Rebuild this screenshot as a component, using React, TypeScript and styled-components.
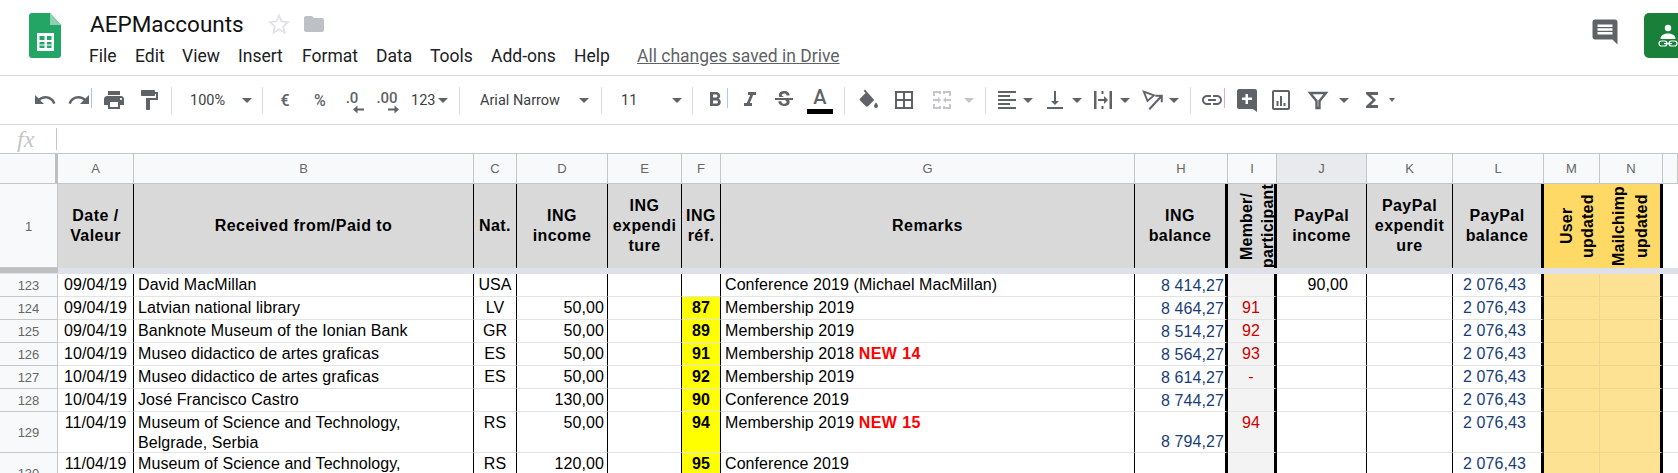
import React from "react";
import styled, {createGlobalStyle} from "styled-components";
import {
    MdUndo, MdRedo, MdPrint, MdFormatPaint, MdFormatBold, MdFormatItalic, MdStrikethroughS,
    MdBorderAll, MdFormatAlignLeft, MdVerticalAlignBottom, MdLink, MdFunctions,
} from "react-icons/md";

const GlobalStyle = createGlobalStyle`
    html, body {
        margin: 0;
        padding: 0;
        background: #fff;
        overflow: hidden;
    }
    body {
        font-family: Roboto, "Liberation Sans", sans-serif;
    }
`;

const Page = styled.div`
    width: 1678px;
    height: 473px;
    overflow: hidden;
    display: flex;
    flex-direction: column;
`;

/* ---------- title bar ---------- */
const TitleBar = styled.header`
    height: 75px;
    flex: none;
    display: flex;
    align-items: flex-start;
    border-bottom: 1px solid #dadce0;
`;
const LogoSlot = styled.div`
    margin: 13px 0 0 29px;
    width: 32px;
    height: 45px;
    flex: none;
`;
const TitleColumn = styled.div`
    margin-left: 28px;
    display: flex;
    flex-direction: column;
`;
const TitleRow = styled.div`
    height: 38px;
    display: flex;
    align-items: center;
    padding-top: 9px;
    box-sizing: border-box;
`;
const DocName = styled.span`
    font-size: 22.5px;
    color: #111;
    margin-left: 1px;
    width: 177px;
`;
const FolderSlot = styled.span`
    margin-left: 11px;
    display: flex;
`;
const MenuBar = styled.nav`
    display: flex;
    align-items: center;
    height: 35px;
    font-size: 17.5px;
    color: #202124;
`;
const MenuItem = styled.span<{$x: number}>`
    width: ${p => p.$x}px;
`;
const SavedNote = styled.span`
    color: #5f6368;
    text-decoration: underline;
`;
const RightActions = styled.div`
    margin-left: auto;
    display: flex;
    align-items: flex-start;
`;
const CommentSlot = styled.div`
    margin-top: 17px;
    display: flex;
    color: #5f6368;
`;
const ShareButton = styled.div`
    margin: 13px 0 0 24px;
    width: 34px;
    height: 45px;
    background: #188038;
    border-radius: 5px 0 0 5px;
    display: flex;
    align-items: center;
    padding-left: 14px;
    box-sizing: border-box;
`;

/* ---------- toolbar ---------- */
const Toolbar = styled.div`
    height: 48px;
    flex: none;
    display: flex;
    align-items: center;
    border-bottom: 1px solid #dadce0;
    color: #5f6368;
`;
const Tool = styled.span<{$ml: number; $w?: number; $mark?: string}>`
    position: relative;
    flex: none;
    margin-left: ${p => p.$ml}px;
    width: ${p => p.$w ?? 24}px;
    height: 24px;
    display: flex;
    align-items: center;
    justify-content: center;
    color: inherit;
    &::after {
        content: "";
        display: ${p => (p.$mark ? "block" : "none")};
        position: absolute;
        right: -1px;
        top: 0;
        width: 1px;
        height: 20px;
        background: ${p => p.$mark};
    }
`;
const TextTool = styled(Tool)`
    font-size: 16px;
    font-weight: 500;
`;
const Divider = styled.span<{$ml: number}>`
    flex: none;
    margin-left: ${p => p.$ml}px;
    width: 1px;
    height: 27px;
    background: #dadce0;
`;
const Caret = styled.span<{$ml?: number; $small?: boolean}>`
    flex: none;
    margin-left: ${p => p.$ml ?? 0}px;
    width: 0;
    height: 0;
    border-style: solid;
    border-color: #5f6368 transparent transparent transparent;
    border-width: ${p => (p.$small ? "4px 3.5px 0 3.5px" : "5px 5px 0 5px")};
`;
const PaleCaret = styled(Caret)`
    border-top-color: #c4c6c9;
`;
const Select = styled.span<{$ml: number; $w: number}>`
    flex: none;
    margin-left: ${p => p.$ml}px;
    width: ${p => p.$w}px;
    display: flex;
    align-items: center;
    justify-content: space-between;
    font-size: 14.5px;
    color: #3c4043;
`;
const DecimalTool = styled(Tool)`
    flex-direction: column;
    font-size: 15px;
    font-weight: 500;
    line-height: 16px;
    height: 28px;
    justify-content: flex-start;
    padding-top: 4px;
    box-sizing: border-box;
`;
const ArrowSlot = styled.span`
    display: flex;
    margin: -1px 0 0 14px;
`;
const ColorTool = styled(Tool)`
    flex-direction: column;
    height: 32px;
    justify-content: flex-start;
    font-size: 20px;
    font-weight: 500;
    line-height: 22px;
    margin-top: 4px;
`;
const ColorBar = styled.span`
    width: 26px;
    height: 5px;
    background: #000;
    margin-top: 1px;
    flex: none;
`;

/* ---------- formula bar ---------- */
const FormulaBar = styled.div`
    height: 28px;
    flex: none;
    display: flex;
    align-items: center;
    border-bottom: 1px solid #c4c7c5;
`;
const FxLabel = styled.span`
    margin-left: 17px;
    width: 39px;
    font-family: "Liberation Serif", serif;
    font-style: italic;
    font-size: 24px;
    color: #c4c6c9;
    line-height: 28px;
`;
const FormulaRule = styled.span`
    width: 1px;
    height: 22px;
    background: #c4c6c9;
`;

/* ---------- sheet ---------- */
const GRID = "58px 76px 340px 43px 91px 74px 39px 414px 93px 49px 90px 86px 91px 56px 63px 1fr";

const Row = styled.div<{$h: number}>`
    display: grid;
    grid-template-columns: ${GRID};
    height: ${p => p.$h}px;
    flex: none;
`;
const ColLabel = styled.div<{$active?: boolean; $corner?: boolean}>`
    box-sizing: border-box;
    display: flex;
    align-items: center;
    justify-content: center;
    font-family: "Liberation Sans", sans-serif;
    font-size: 13px;
    color: #666;
    background: ${p => (p.$active ? "#e8eaed" : "#f8f9fa")};
    border-right: ${p => (p.$corner ? "3px solid #bdbfc1" : "1px solid #c4c7c5")};
    border-bottom: 1px solid #c4c7c5;
`;
const RowLabel = styled.div`
    box-sizing: border-box;
    display: flex;
    align-items: center;
    justify-content: center;
    font-family: "Liberation Sans", sans-serif;
    font-size: 13px;
    color: #666;
    background: #f8f9fa;
    border-right: 1px solid #c4c7c5;
    border-bottom: 1px solid #c4c7c5;
    padding-top: 1px;
`;
const HeadCell = styled.div<{$edge: string; $bg?: string}>`
    box-sizing: border-box;
    display: flex;
    align-items: center;
    justify-content: center;
    text-align: center;
    font-family: "Liberation Sans", sans-serif;
    font-weight: 700;
    font-size: 16px;
    line-height: 20px;
    letter-spacing: 0.45px;
    color: #000;
    background: ${p => p.$bg ?? "#d9d9d9"};
    border-right: ${p => p.$edge};
    white-space: pre-line;
`;
/* turned by 180deg, so the padding on the right shows up on the left */
const TurnedHead = styled(HeadCell)<{$shift: number; $lead: number}>`
    writing-mode: vertical-rl;
    transform: rotate(180deg);
    border-right: none;
    border-left: ${p => p.$edge};
    padding-right: ${p => p.$shift}px;
    letter-spacing: 0.2px;
    line-height: ${p => p.$lead}px;
`;
const Band = styled.div`
    display: flex;
    height: 6px;
    flex: none;
    background: #dfe1ea;
`;
const BandStub = styled.div`
    width: 58px;
    background: #bdbfc1;
    margin-bottom: 1px;
`;
const Cell = styled.div<{
    $edge: string; $align: string; $pad: string; $color?: string; $bg?: string; $bold?: boolean; $low?: boolean;
}>`
    box-sizing: border-box;
    font-family: "Liberation Sans", sans-serif;
    font-size: 16px;
    line-height: 20px;
    letter-spacing: 0.08px;
    font-weight: ${p => (p.$bold ? 700 : 400)};
    color: ${p => p.$color ?? "#000"};
    background: ${p => p.$bg ?? "#fff"};
    text-align: ${p => p.$align};
    padding: ${p => p.$pad};
    border-right: ${p => p.$edge};
    border-bottom: 1px solid ${p => (p.$bg === "#fde293" ? "#eed690" : "#e2e3e3")};
    white-space: pre-line;
    overflow: hidden;
    display: flex;
    flex-direction: column;
    justify-content: ${p => (p.$low ? "flex-end" : "flex-start")};
`;
const NewTag = styled.b`
    color: #ff0000;
    letter-spacing: 0.4px;
`;

const THIN = "1px solid #000";
const THICK = "3px solid #000";
const ONSAND = "1px solid #eed690";
const NAVY = "#1a3d78";

type Column = {
    edge: string;
    align: string;
    pad: string;
    color?: string;
    bg?: string;
    bold?: boolean;
    low?: boolean;
};

const columns: Column[] = [
    {edge: THIN, align: "center", pad: "1px 0 0 0"},
    {edge: THIN, align: "left", pad: "1px 0 0 4px"},
    {edge: THIN, align: "center", pad: "1px 0 0 0"},
    {edge: THIN, align: "right", pad: "1px 3px 0 0"},
    {edge: THIN, align: "right", pad: "1px 3px 0 0"},
    {edge: THIN, align: "center", pad: "1px 0 0 0", bold: true},
    {edge: THIN, align: "left", pad: "1px 0 0 4px"},
    {edge: THICK, align: "right", pad: "1px 1px 0 0", color: NAVY, low: true},
    {edge: THICK, align: "center", pad: "1px 0 0 0", color: "#cc0000", bg: "#f3f3f3"},
    {edge: THIN, align: "right", pad: "1px 18px 0 0"},
    {edge: THIN, align: "right", pad: "1px 3px 0 0"},
    {edge: THICK, align: "left", pad: "1px 0 0 10px", color: NAVY},
    {edge: ONSAND, align: "center", pad: "1px 0 0 0", bg: "#fde293"},
    {edge: THICK, align: "center", pad: "1px 0 0 0", bg: "#fde293"},
    {edge: "none", align: "left", pad: "1px 0 0 0"},
];

const colLetters = ["A", "B", "C", "D", "E", "F", "G", "H", "I", "J", "K", "L", "M", "N", ""];

type SheetRow = {
    id: string;
    h: number;
    cells: React.ReactNode[];
};

const museum = "Museo didactico de artes graficas";
const balance = "2 076,43";

const rows: SheetRow[] = [
    {id: "123", h: 23, cells: ["09/04/19", "David MacMillan", "USA", "", "", "", "Conference 2019 (Michael MacMillan)", "8 414,27", "", "90,00", "", balance]},
    {id: "124", h: 23, cells: ["09/04/19", "Latvian national library", "LV", "50,00", "", "87", "Membership 2019", "8 464,27", "91", "", "", balance]},
    {id: "125", h: 23, cells: ["09/04/19", "Banknote Museum of the Ionian Bank", "GR", "50,00", "", "89", "Membership 2019", "8 514,27", "92", "", "", balance]},
    {id: "126", h: 23, cells: ["10/04/19", museum, "ES", "50,00", "", "91", <span>Membership 2018 <NewTag>NEW 14</NewTag></span>, "8 564,27", "93", "", "", balance]},
    {id: "127", h: 23, cells: ["10/04/19", museum, "ES", "50,00", "", "92", "Membership 2019", "8 614,27", "-", "", "", balance]},
    {id: "128", h: 23, cells: ["10/04/19", "José Francisco Castro", "", "130,00", "", "90", "Conference 2019", "8 744,27", "", "", "", balance]},
    {id: "129", h: 41, cells: ["11/04/19", "Museum of Science and Technology,\nBelgrade, Serbia", "RS", "50,00", "", "94", <span>Membership 2019 <NewTag>NEW 15</NewTag></span>, "8 794,27", "94", "", "", balance]},
    {id: "130", h: 41, cells: ["11/04/19", "Museum of Science and Technology,\nBelgrade, Serbia", "RS", "120,00", "", "95", "Conference 2019", "", "", "", "", balance]},
];

const yellowFor = (colIndex: number, value: React.ReactNode) =>
    colIndex === 5 && value ? "#ffff00" : undefined;

const Sheet = styled.div`
    flex: 1;
    display: flex;
    flex-direction: column;
    overflow: hidden;
`;

/* ---------- drawings ---------- */
const SheetsLogo = () => (
    <svg width="32" height="45" viewBox="0 0 32 45">
        <path d="M3 0H21L32 12V42a3 3 0 0 1-3 3H3a3 3 0 0 1-3-3V3a3 3 0 0 1 3-3z" fill="#23a566"/>
        <path d="M21 0L32 12H21z" fill="#8ed1b1"/>
        <path d="M8 20H25V38H8zM10.500 23V27H15.500V23zM18 23V27H22.500V23zM10.500 29V35H15.500V29zM18 29V35H22.500V29z" fill="#fff" fillRule="evenodd"/>
        <path d="M10.500 31.500H22.500V32.500H10.500z" fill="#fff"/>
    </svg>
);
const Star = () => (
    <svg width="24" height="24" viewBox="0 0 24 24" fill="none" stroke="#e0e2e4" strokeWidth="1.800">
        <path d="M12 3.500l2.600 6 6.400.6-4.800 4.200 1.400 6.300L12 17.300l-5.600 3.300 1.400-6.300L3 10.100l6.400-.6z"/>
    </svg>
);
const Folder = () => (
    <svg width="24" height="24" viewBox="0 0 24 24" fill="#bdc1c6">
        <path d="M10 4H4C2.900 4 2 4.900 2 6v12c0 1.100.9 2 2 2h16c1.100 0 2-.9 2-2V8c0-1.100-.9-2-2-2h-8l-2-2z"/>
    </svg>
);
const CommentIcon = () => (
    <svg width="30" height="30" viewBox="0 0 24 24" fill="currentColor">
        <path d="M21.990 4c0-1.100-.89-2-1.990-2H4c-1.100 0-2 .9-2 2v12c0 1.100.9 2 2 2h14l4 4-.01-18zM18 14H6v-2h12v2zm0-3H6V9h12v2zm0-3H6V6h12v2z"/>
    </svg>
);
const ShareIcon = () => (
    <svg width="20" height="26" viewBox="0 0 20 26" fill="#fff">
        <circle cx="10" cy="5" r="3.200"/>
        <path d="M2.500 16c0-4 4-5.500 7.500-5.500s7.500 1.500 7.500 5.500z"/>
        <rect x="1" y="18" width="8" height="5" rx="2.500" fill="none" stroke="#fff" strokeWidth="1.200"/>
        <rect x="11" y="18" width="8" height="5" rx="2.500" fill="none" stroke="#fff" strokeWidth="1.200"/>
        <rect x="6" y="20" width="8" height="1.200"/>
    </svg>
);
const ArrowLeft = () => (
    <svg width="12" height="9" viewBox="0 0 12 9" fill="currentColor">
        <path d="M0 4.500L4.500 0.500V3.500H11V5.500H4.500V8.500z"/>
    </svg>
);
const ArrowRight = () => (
    <svg width="12" height="9" viewBox="0 0 12 9" fill="currentColor">
        <path d="M11 4.500L6.500 0.500V3.500H0V5.500H6.500V8.500z"/>
    </svg>
);
const FillIcon = () => (
    <svg width="24" height="24" viewBox="0 0 24 24" fill="currentColor">
        <path d="M9 1.500L7.600 2.900l2 2-5.500 5.500c-.6.6-.6 1.500 0 2.100l5.700 5.700c.6.6 1.500.6 2.100 0l6.300-6.300z"/>
        <path d="M20 14.500s-2 2.200-2 3.500c0 1.100.9 2 2 2s2-.9 2-2c0-1.300-2-3.500-2-3.500z"/>
    </svg>
);
const MergeIcon = () => (
    <svg width="24" height="24" viewBox="0 0 24 24" fill="#c4c6c9">
        <path d="M3 3h8v3H9V5H5v3H3zM13 3h8v5h-2V5h-4v1h-2zM3 16h2v3h4v-1h2v3H3zM19 16h2v5h-8v-3h2v1h4z"/>
        <path d="M3 11h5V9l3 3-3 3v-2H3zM21 11h-5V9l-3 3 3 3v-2h5z"/>
    </svg>
);
const WrapIcon = () => (
    <svg width="24" height="24" viewBox="0 0 24 24" fill="currentColor">
        <path d="M3 3h2.500v18H3zM18.500 3H21v18h-2.500zM7 11h6V8l4 4-4 4v-3H7zM10.500 3h2v3h-2zM10.500 18h2v3h-2z"/>
    </svg>
);
const RotateIcon = () => (
    <svg width="26" height="24" viewBox="0 0 26 24" fill="none" stroke="currentColor" strokeWidth="2">
        <path d="M3 3l11 4-7 6z"/>
        <path d="M9 22L22 8M15.500 7.500H22.500V14.500" strokeWidth="2.200"/>
    </svg>
);
const ChartIcon = () => (
    <svg width="24" height="24" viewBox="0 0 24 24" fill="currentColor">
        <path d="M19 2H5c-1.100 0-2 .9-2 2v16c0 1.100.9 2 2 2h14c1.100 0 2-.9 2-2V4c0-1.100-.9-2-2-2zm0 18H5V4h14v16zM7.500 13h2v5h-2zm3.500-5h2v10h-2zm3.500 7h2v3h-2z"/>
    </svg>
);
const AddNoteIcon = () => (
    <svg width="24" height="24" viewBox="0 0 24 24" fill="currentColor">
        <path d="M22 3c0-1-.9-2-2-2H4C2.900 1 2 2 2 3v16c0 1.100.9 2 2 2h14l4 3zM17 12h-4v4h-2.500v-4H7V9.500h3.500V6H13v3.500h4z"/>
    </svg>
);
const FunnelIcon = () => (
    <svg width="24" height="24" viewBox="0 0 24 24" fill="none" stroke="currentColor" strokeWidth="2.400">
        <path d="M4 5h16l-6.500 8v7h-3v-7z"/>
    </svg>
);

const menuItems: [string, number][] = [
    ["File", 46], ["Edit", 47], ["View", 56], ["Insert", 64], ["Format", 74],
    ["Data", 54], ["Tools", 61], ["Add-ons", 83], ["Help", 63],
];

export default function App() {
    return (
        <Page>
            <GlobalStyle/>
            <TitleBar>
                <LogoSlot><SheetsLogo/></LogoSlot>
                <TitleColumn>
                    <TitleRow>
                        <DocName>AEPMaccounts</DocName>
                        <Star/>
                        <FolderSlot><Folder/></FolderSlot>
                    </TitleRow>
                    <MenuBar>
                        {menuItems.map(([label, x]) => (
                            <MenuItem key={label} $x={x}>{label}</MenuItem>
                        ))}
                        <SavedNote>All changes saved in Drive</SavedNote>
                    </MenuBar>
                </TitleColumn>
                <RightActions>
                    <CommentSlot><CommentIcon/></CommentSlot>
                    <ShareButton><ShareIcon/></ShareButton>
                </RightActions>
            </TitleBar>

            <Toolbar>
                <Tool $ml={33}><MdUndo size={24}/></Tool>
                <Tool $ml={10} $mark="#a8c7fa"><MdRedo size={24}/></Tool>
                <Tool $ml={11}><MdPrint size={24}/></Tool>
                <Tool $ml={11}><MdFormatPaint size={24}/></Tool>
                <Divider $ml={10}/>
                <Select $ml={18} $w={62}>100%<Caret/></Select>
                <Divider $ml={10}/>
                <TextTool $ml={12} $w={20}>€</TextTool>
                <TextTool $ml={15} $w={20}>%</TextTool>
                <DecimalTool $ml={10}>.0<ArrowSlot><ArrowLeft/></ArrowSlot></DecimalTool>
                <DecimalTool $ml={8} $w={30}>.00<ArrowSlot><ArrowRight/></ArrowSlot></DecimalTool>
                <Select $ml={9} $w={37}>123<Caret/></Select>
                <Divider $ml={11}/>
                <Select $ml={20} $w={109}>Arial Narrow<Caret/></Select>
                <Divider $ml={12}/>
                <Select $ml={19} $w={61}>11<Caret/></Select>
                <Divider $ml={10}/>
                <Tool $ml={10} $mark="#a8c7fa"><MdFormatBold size={28}/></Tool>
                <Tool $ml={11}><MdFormatItalic size={26}/></Tool>
                <Tool $ml={10}><MdStrikethroughS size={24}/></Tool>
                <ColorTool $ml={12}>A<ColorBar/></ColorTool>
                <Divider $ml={12}/>
                <Tool $ml={11}><FillIcon/></Tool>
                <Tool $ml={12}><MdBorderAll size={24}/></Tool>
                <Tool $ml={14}><MergeIcon/></Tool>
                <PaleCaret $ml={10}/>
                <Divider $ml={11}/>
                <Tool $ml={9}><MdFormatAlignLeft size={26}/></Tool>
                <Caret $ml={4}/>
                <Tool $ml={10}><MdVerticalAlignBottom size={24}/></Tool>
                <Caret $ml={5}/>
                <Tool $ml={9}><WrapIcon/></Tool>
                <Caret $ml={5}/>
                <Tool $ml={11}><RotateIcon/></Tool>
                <Caret $ml={4}/>
                <Divider $ml={11}/>
                <Tool $ml={9} $mark="#e0a8e6"><MdLink size={26}/></Tool>
                <Tool $ml={11}><AddNoteIcon/></Tool>
                <Tool $ml={10}><ChartIcon/></Tool>
                <Tool $ml={13}><FunnelIcon/></Tool>
                <Caret $ml={9}/>
                <Tool $ml={11}><MdFunctions size={28}/></Tool>
                <Caret $ml={5} $small/>
            </Toolbar>

            <FormulaBar>
                <FxLabel>fx</FxLabel>
                <FormulaRule/>
            </FormulaBar>

            <Sheet>
                <Row $h={30}>
                    <ColLabel $corner/>
                    {colLetters.map((letter, i) => (
                        <ColLabel key={i} $active={letter === "J"}>{letter}</ColLabel>
                    ))}
                </Row>
                <Row $h={84}>
                    <RowLabel>1</RowLabel>
                    <HeadCell $edge={THIN}>{"Date /\nValeur"}</HeadCell>
                    <HeadCell $edge={THIN}>Received from/Paid to</HeadCell>
                    <HeadCell $edge={THIN}>Nat.</HeadCell>
                    <HeadCell $edge={THIN}>{"ING\nincome"}</HeadCell>
                    <HeadCell $edge={THIN}>{"ING\nexpendi\nture"}</HeadCell>
                    <HeadCell $edge={THIN}>{"ING\nréf."}</HeadCell>
                    <HeadCell $edge={THIN}>Remarks</HeadCell>
                    <HeadCell $edge={THICK}>{"ING\nbalance"}</HeadCell>
                    <TurnedHead $edge={THICK} $shift={12} $lead={21}>{"Member/\nparticipant"}</TurnedHead>
                    <HeadCell $edge={THIN}>{"PayPal\nincome"}</HeadCell>
                    <HeadCell $edge={THIN}>{"PayPal\nexpendit\nure"}</HeadCell>
                    <HeadCell $edge={THICK}>{"PayPal\nbalance"}</HeadCell>
                    <TurnedHead $edge="1px solid #ffd966" $bg="#ffd966" $shift={10} $lead={21}>{"User\nupdated"}</TurnedHead>
                    <TurnedHead $edge={THICK} $bg="#ffd966" $shift={0} $lead={23}>{"Mailchimp\nupdated"}</TurnedHead>
                    <div/>
                </Row>
                <Band><BandStub/></Band>
                {rows.map(row => (
                    <Row key={row.id} $h={row.h}>
                        <RowLabel>{row.id}</RowLabel>
                        {columns.map((col, i) => (
                            <Cell
                                key={i}
                                $edge={col.edge}
                                $align={col.align}
                                $pad={col.pad}
                                $color={col.color}
                                $bg={yellowFor(i, row.cells[i]) ?? col.bg}
                                $bold={col.bold}
                                $low={col.low}
                            >
                                {row.cells[i] ? <div>{row.cells[i]}</div> : null}
                            </Cell>
                        ))}
                    </Row>
                ))}
            </Sheet>
        </Page>
    );
}
